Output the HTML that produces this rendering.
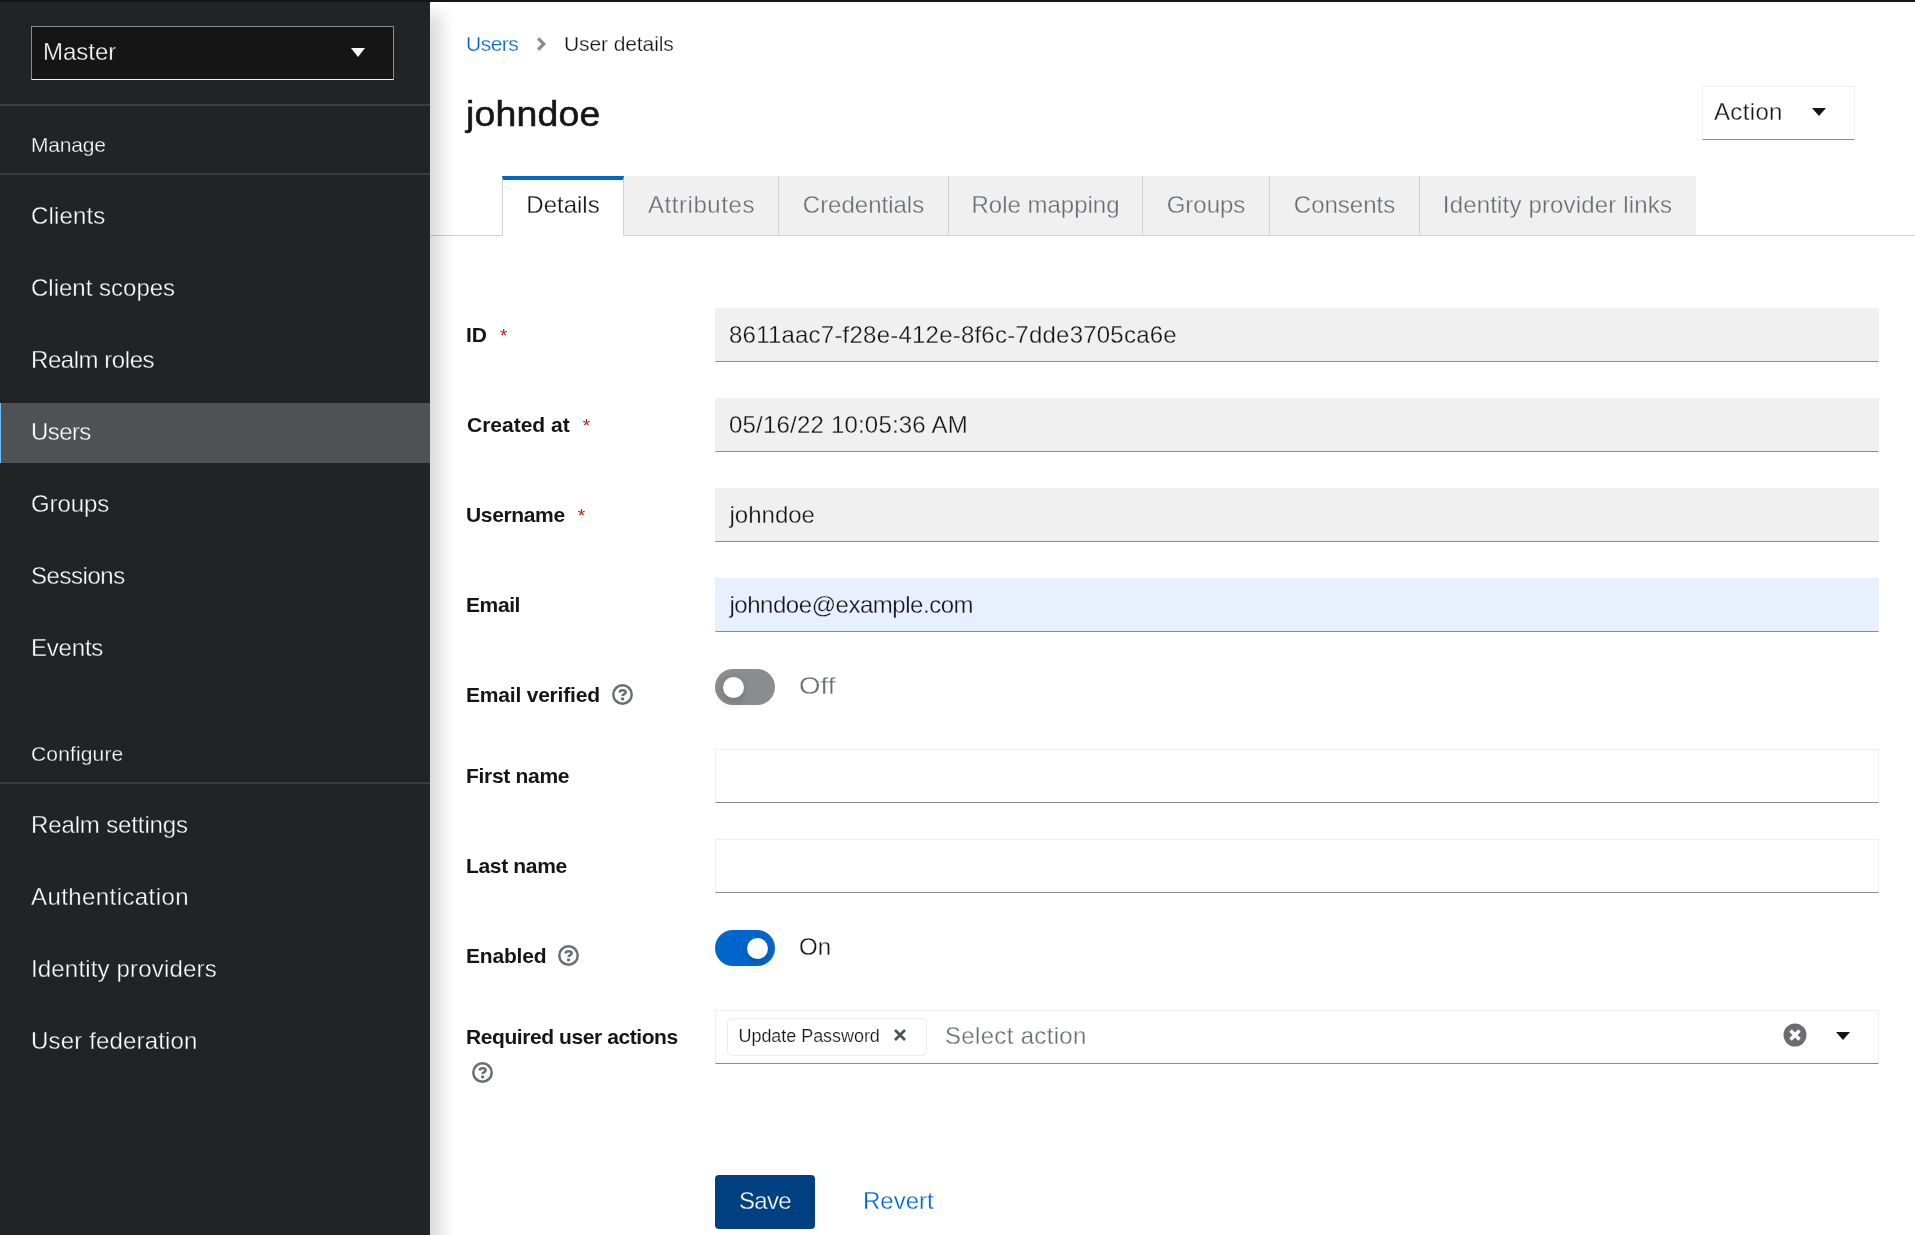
<!DOCTYPE html>
<html lang="en">
<head>
<meta charset="utf-8">
<title>Keycloak Administration Console</title>
<style>
*{box-sizing:border-box;margin:0;padding:0}
html,body{width:1915px;height:1235px;overflow:hidden;background:#fff}
body{font-family:"Liberation Sans",sans-serif;color:#151515;font-size:24px;line-height:36px;position:relative}
.abs{position:absolute}
#topbar{left:0;top:0;width:1915px;height:2px;background:#151515;z-index:5}
#side{left:0;top:0;width:430px;height:1235px;background:#212427;z-index:3}
#sideshadow{left:0;top:8px;width:430px;height:1300px;box-shadow:18px 0 15px -6px rgba(3,3,3,.14);z-index:2}
#realm{left:31px;top:26px;width:363px;height:54px;background:#151515;border:1px solid #8a8d90;border-bottom-color:#f0f0f0;color:#fff}
#realm span{position:absolute;left:11px;top:7px;letter-spacing:0;-webkit-text-stroke:0.35px #151515;font-size:24px;line-height:36px}
.caret{position:absolute;width:0;height:0;border-left:8px solid transparent;border-right:8px solid transparent;border-top:8px solid #151515}
.sec{left:0;width:430px;height:69px;border-bottom:2px solid #3a3d40;color:#fff;font-size:21px}
.sec span{position:absolute;left:31px;-webkit-text-stroke:0.3px #212427}
.nav{left:0;width:430px;height:60px;color:#fff;font-size:24px;line-height:36px}
.nav span{position:absolute;left:31px;top:11px;white-space:nowrap;-webkit-text-stroke:0.35px #212427}
.nav.cur span{-webkit-text-stroke-color:#4f5255}
.nav.cur{background:#4f5255}
.nav.cur:before{content:"";position:absolute;left:0;top:0;width:1px;height:60px;background:#73bcf7}
#main{left:430px;top:0;width:1485px;height:1235px;background:#fff}
.lbl{left:466px;font-weight:bold;font-size:21px;line-height:32px;white-space:nowrap}
.req{color:#c9190b;font-weight:normal;font-size:19px;margin-left:13px;letter-spacing:0}
.inp{left:715px;width:1164px;height:54px;border:1px solid #f0f0f0;border-bottom:1px solid #8a8d90;background:#fff;font-size:24px;line-height:36px;padding:8px 13px;white-space:nowrap}
.inp.dis{-webkit-text-stroke:0.3px #f0f0f0;background:#f0f0f0;border-color:#f0f0f0;border-bottom-color:#8a8d90}
.inp.auto{-webkit-text-stroke:0.3px #e8f0fe;background:#e8f0fe;border-color:#e8f0fe;border-bottom-color:#8a8d90}
.tab{-webkit-text-stroke:0.3px #f0f0f0;top:176px;height:60px;background:#f0f0f0;color:#6a6e73;font-size:24px;line-height:36px;padding:11px 0;text-align:center;border-right:1px solid #d2d2d2;border-bottom:1px solid #d2d2d2;white-space:nowrap}
.sw{left:715px;width:60px;height:36px;border-radius:18px}
.sw i{position:absolute;top:7.5px;width:21.5px;height:21.5px;border-radius:11px;background:#fff;box-shadow:0 6px 12px 0 rgba(3,3,3,.12),0 0 6px 0 rgba(3,3,3,.06)}
.swl{-webkit-text-stroke:0.3px #fff;left:799px;font-size:24px;line-height:36px}
</style>
</head>
<body>
<div id="wrap" class="abs" style="left:0;top:0;width:1915px;height:1235px;will-change:transform">
<div id="main" class="abs"></div>

<!-- sidebar -->
<div id="sideshadow" class="abs"></div>
<div id="side" class="abs">
  <div id="realm" class="abs"><span>Master</span><div class="caret" style="left:318.5px;top:21px;border-left-width:7.5px;border-right-width:7.5px;border-top-width:9px;border-top-color:#fff"></div></div>
  <div class="abs" style="left:0;top:104px;width:430px;height:2px;background:#3c3f42"></div>
  <div class="abs sec" style="top:106px"><span style="top:21px;letter-spacing:-0.2px">Manage</span></div>
  <div class="abs nav" style="top:187px"><span style="letter-spacing:0.15px">Clients</span></div>
  <div class="abs nav" style="top:259px"><span style="letter-spacing:0px">Client scopes</span></div>
  <div class="abs nav" style="top:331px"><span style="letter-spacing:-0.45px">Realm roles</span></div>
  <div class="abs nav cur" style="top:403px"><span style="letter-spacing:-0.6px">Users</span></div>
  <div class="abs nav" style="top:475px"><span style="letter-spacing:-0.1px">Groups</span></div>
  <div class="abs nav" style="top:547px"><span style="letter-spacing:-0.45px">Sessions</span></div>
  <div class="abs nav" style="top:619px"><span style="letter-spacing:-0.2px">Events</span></div>
  <div class="abs sec" style="top:715px"><span style="top:21px;letter-spacing:0.15px">Configure</span></div>
  <div class="abs nav" style="top:796px"><span style="letter-spacing:-0.13px">Realm settings</span></div>
  <div class="abs nav" style="top:868px"><span style="letter-spacing:0.42px">Authentication</span></div>
  <div class="abs nav" style="top:940px"><span style="letter-spacing:0.17px">Identity providers</span></div>
  <div class="abs nav" style="top:1012px"><span style="letter-spacing:0.17px">User federation</span></div>
</div>
<div id="topbar" class="abs"></div>

<!-- breadcrumb -->
<div class="abs" style="left:466px;top:26px;font-size:21px;line-height:36px;color:#06c;letter-spacing:-0.5px;-webkit-text-stroke:0.25px #fff">Users</div>
<svg class="abs" style="left:535px;top:35.6px" width="14" height="16" viewBox="0 0 14 16"><path d="M3.2 2.4 L8.8 8 L3.2 13.6" fill="none" stroke="#8a8d90" stroke-width="3.2" stroke-linejoin="miter"/></svg>
<div class="abs" style="left:564px;top:26px;font-size:21px;line-height:36px;color:#151515;white-space:nowrap;letter-spacing:-0.1px;-webkit-text-stroke:0.25px #fff">User details</div>

<!-- title -->
<div class="abs" style="left:466px;top:90px;font-size:34.5px;line-height:48px;color:#151515;letter-spacing:0.15px;transform:scaleX(1.085);transform-origin:0 0;white-space:nowrap;-webkit-text-stroke:0.55px #151515">johndoe</div>

<!-- Action dropdown -->
<div class="abs" style="left:1702px;top:86px;width:153px;height:54px;border:1px solid #f0f0f0;border-bottom:1px solid #8a8d90;background:#fff">
  <span class="abs" style="left:11px;top:7px;font-size:24px;line-height:36px;letter-spacing:0.35px;-webkit-text-stroke:0.3px #fff">Action</span>
  <div class="caret" style="left:109px;top:21px;border-left-width:7px;border-right-width:7px;border-top-width:8px"></div>
</div>

<!-- tabs -->
<div class="abs" style="left:430px;top:235px;width:1485px;height:1px;background:#d2d2d2"></div>
<div class="abs tab" style="left:502px;width:122px;background:#fff;color:#151515;border-left:1px solid #d2d2d2;border-bottom-color:#fff;border-top:4px solid #06c;padding-top:7px;padding-right:0;-webkit-text-stroke-color:#fff">Details</div>
<div class="abs tab" style="left:624px;width:155px;letter-spacing:0.55px;padding-left:1px">Attributes</div>
<div class="abs tab" style="left:779px;width:170px">Credentials</div>
<div class="abs tab" style="left:949px;width:194px">Role mapping</div>
<div class="abs tab" style="left:1143px;width:127px">Groups</div>
<div class="abs tab" style="left:1270px;width:150px">Consents</div>
<div class="abs tab" style="left:1420px;width:276px;border-right:none;letter-spacing:0.17px;padding-right:1px">Identity provider links</div>

<!-- form -->
<div class="abs lbl" style="top:319px">ID<span class="req">*</span></div>
<div class="abs inp dis" style="top:308px;letter-spacing:0.22px">8611aac7-f28e-412e-8f6c-7dde3705ca6e</div>

<div class="abs lbl" style="top:409px;left:467px">Created at<span class="req">*</span></div>
<div class="abs inp dis" style="top:398px;letter-spacing:0.2px">05/16/22 10:05:36 AM</div>

<div class="abs lbl" style="top:499px;letter-spacing:-0.35px">Username<span class="req">*</span></div>
<div class="abs inp dis" style="top:488px;padding-left:13.5px">johndoe</div>

<div class="abs lbl" style="top:589px;letter-spacing:-0.4px">Email</div>
<div class="abs inp auto" style="top:578px;padding-left:13.5px;letter-spacing:-0.47px">johndoe@example.com</div>

<div class="abs lbl" style="top:679px;letter-spacing:-0.2px">Email verified</div>
<svg class="abs help" style="left:612px;top:683.9px" width="21" height="21" viewBox="0 0 21 21"><circle cx="10.5" cy="10.5" r="9.2" fill="none" stroke="#6a6e73" stroke-width="2.5"/><path d="M7.5 8.5 C7.7 6.8 9 6.2 10.6 6.2 C12.4 6.2 13.7 7 13.7 8.4 C13.7 10.2 10.6 10.1 10.6 12" fill="none" stroke="#6a6e73" stroke-width="2.5"/><rect x="9.1" y="13.5" width="3" height="2.8" fill="#6a6e73"/></svg>
<div class="abs sw" style="top:669px;background:#8a8d90"><i style="left:7.7px"></i></div>
<div class="abs swl" style="top:668px;color:#6a6e73;transform:scaleX(1.15);transform-origin:0 0">Off</div>

<div class="abs lbl" style="top:760px;letter-spacing:-0.3px">First name</div>
<div class="abs inp" style="top:749px"></div>

<div class="abs lbl" style="top:850px;letter-spacing:-0.33px">Last name</div>
<div class="abs inp" style="top:839px"></div>

<div class="abs lbl" style="top:940px;letter-spacing:-0.2px">Enabled</div>
<svg class="abs help" style="left:558.2px;top:944.9px" width="21" height="21" viewBox="0 0 21 21"><circle cx="10.5" cy="10.5" r="9.2" fill="none" stroke="#6a6e73" stroke-width="2.5"/><path d="M7.5 8.5 C7.7 6.8 9 6.2 10.6 6.2 C12.4 6.2 13.7 7 13.7 8.4 C13.7 10.2 10.6 10.1 10.6 12" fill="none" stroke="#6a6e73" stroke-width="2.5"/><rect x="9.1" y="13.5" width="3" height="2.8" fill="#6a6e73"/></svg>
<div class="abs sw" style="top:930px;background:#06c"><i style="left:31.5px"></i></div>
<div class="abs swl" style="top:929px;color:#151515">On</div>

<div class="abs lbl" style="top:1021px;letter-spacing:-0.42px">Required user actions</div>
<svg class="abs help" style="left:472.2px;top:1061.8px" width="21" height="21" viewBox="0 0 21 21"><circle cx="10.5" cy="10.5" r="9.2" fill="none" stroke="#6a6e73" stroke-width="2.5"/><path d="M7.5 8.5 C7.7 6.8 9 6.2 10.6 6.2 C12.4 6.2 13.7 7 13.7 8.4 C13.7 10.2 10.6 10.1 10.6 12" fill="none" stroke="#6a6e73" stroke-width="2.5"/><rect x="9.1" y="13.5" width="3" height="2.8" fill="#6a6e73"/></svg>
<div class="abs inp" style="top:1010px;padding:0">
  <div class="abs" style="left:11px;top:7px;width:200px;height:38px;border:1px solid #ececec;border-radius:4.5px;background:#fff;font-size:18px;line-height:35px;padding-left:10.5px;white-space:nowrap;letter-spacing:-0.05px;-webkit-text-stroke:0.2px #fff">Update Password</div>
  <svg class="abs" style="left:177px;top:17px" width="14" height="14" viewBox="0 0 14 14"><path d="M2 2 L12 12 M12 2 L2 12" stroke="#4f5255" stroke-width="2.8" fill="none"/></svg>
  <div class="abs" style="left:229px;top:7px;font-size:24px;line-height:36px;color:#6a6e73;white-space:nowrap;letter-spacing:0.33px;-webkit-text-stroke:0.3px #fff">Select action</div>
  <svg class="abs" style="left:1067px;top:12px" width="24" height="24" viewBox="0 0 24 24"><circle cx="12" cy="12" r="11.5" fill="#6a6e73"/><path d="M7.5 7.5 L16.5 16.5 M16.5 7.5 L7.5 16.5" stroke="#fff" stroke-width="3.4" fill="none"/></svg>
  <div class="caret" style="left:1120px;top:21px;border-left-width:7px;border-right-width:7px;border-top-width:8px"></div>
</div>

<!-- buttons -->
<div class="abs" style="left:715px;top:1175px;width:100px;height:54px;background:#004080;border-radius:4px;color:#fff;font-size:24px;line-height:36px;padding:8px 0;text-align:center;letter-spacing:-0.7px;-webkit-text-stroke:0.3px #004080">Save</div>
<div class="abs" style="left:863px;top:1183px;font-size:24px;line-height:36px;color:#06c;-webkit-text-stroke:0.3px #fff">Revert</div>
</div>
</body>
</html>
